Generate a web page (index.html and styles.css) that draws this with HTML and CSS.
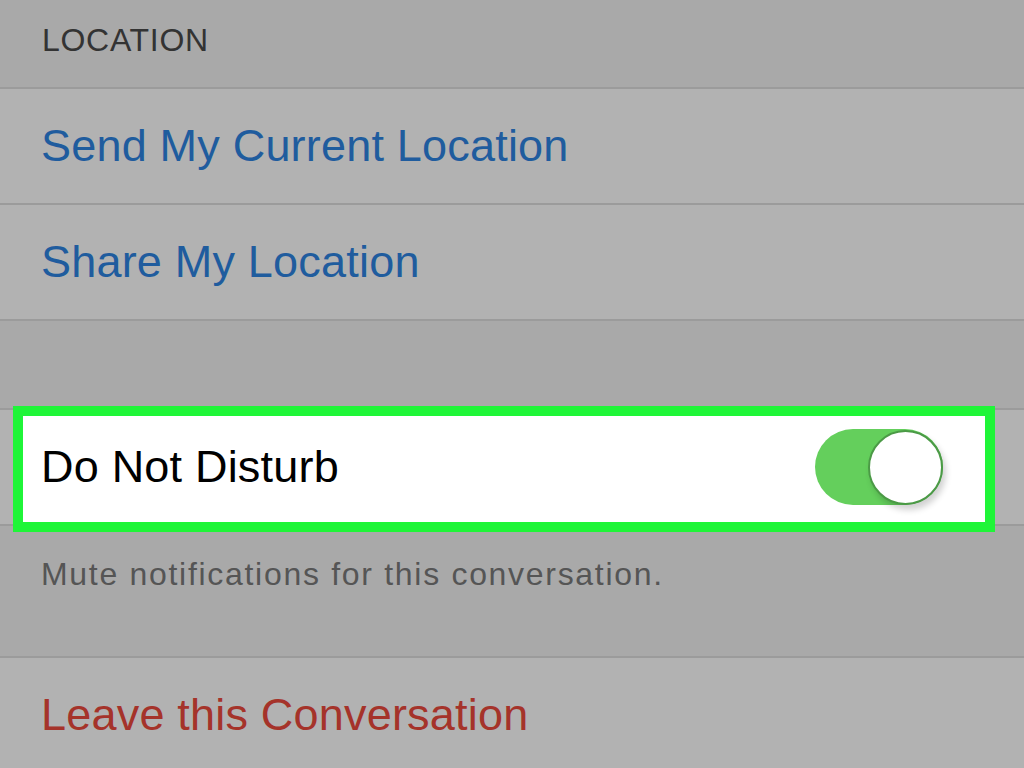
FILE: index.html
```html
<!DOCTYPE html>
<html lang="en">
<head>
    <meta charset="UTF-8">
    <meta name="viewport" content="width=device-width, initial-scale=1.0">
    <title>Conversation Details</title>
    <link rel="stylesheet" href="styles.css">
</head>
<body>
    <div class="screen">
        <div class="section-header">LOCATION</div>

        <div class="group">
            <div class="row link">Send My Current Location</div>
            <div class="row link">Share My Location</div>
        </div>

        <div class="spacer"></div>

        <div class="group">
            <div class="row setting">
                <span class="label">Do Not Disturb</span>
                <span class="toggle on"><span class="knob"></span></span>
                <!-- annotation box drawn over the row -->
                <div class="highlight"></div>
            </div>
        </div>

        <div class="section-footer">Mute notifications for this conversation.</div>

        <div class="group">
            <div class="row danger">Leave this Conversation</div>
        </div>
    </div>
</body>
</html>
```

FILE: styles.css
```css
body {
    margin: 0;
    background-color: #a9a9a9;
    font-family: "Liberation Sans", Arial, sans-serif;
    overflow: hidden;
}

.screen {
    width: 1024px;
    height: 768px;
    overflow: hidden;
}

.section-header {
    height: 63px;
    padding: 24px 0 0 42px;
    font-size: 32px;
    line-height: 32px;
    letter-spacing: 0.7px;
    color: #333333;
}

.group {
    border-top: 2px solid #9b9b9b;
    border-bottom: 2px solid #9b9b9b;
    background-color: #b2b2b2;
}

.row {
    position: relative;
    display: flex;
    align-items: center;
    justify-content: space-between;
    height: 114px;
    padding: 0 81px 0 41px;
    font-size: 45px;
    letter-spacing: 0.2px;
}

.row + .row {
    border-top: 2px solid #9b9b9b;
}

.link {
    color: #1f5c9e;
}

.danger {
    color: #a5332a;
}

.setting {
    color: #000000;
}

.label {
    position: relative;
    z-index: 2;
}

.spacer {
    height: 87px;
}

.section-footer {
    height: 98px;
    padding: 32px 0 0 41px;
    font-size: 32px;
    line-height: 32px;
    letter-spacing: 1.7px;
    color: #555555;
}

.toggle {
    position: relative;
    z-index: 2;
    width: 128px;
    height: 76px;
    border-radius: 38px;
    background-color: #64cf5c;
}

.knob {
    position: absolute;
    top: 1px;
    right: 0;
    width: 71px;
    height: 71px;
    border-radius: 50%;
    background-color: #ffffff;
    border: 2px solid #4b9a46;
    box-shadow: 3px 5px 6px rgba(0, 0, 0, 0.18);
}

.highlight {
    position: absolute;
    top: -4px;
    left: 13px;
    width: 962px;
    height: 106px;
    border: 10px solid #1ff538;
    background-color: #ffffff;
    z-index: 1;
}
```
